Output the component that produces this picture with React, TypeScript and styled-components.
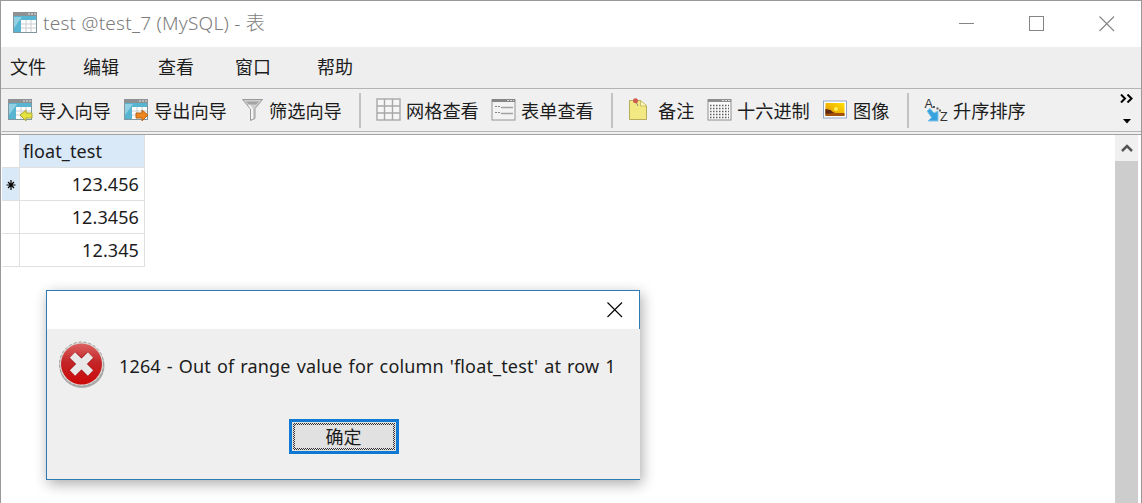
import { ReactNode } from "react";
import styled, { createGlobalStyle } from "styled-components";

const GlobalStyle = createGlobalStyle`
	* {
		box-sizing: border-box;
	}
	body {
		margin: 0;
		overflow: hidden;
		font-family: "Noto Sans", "Noto Sans CJK SC", sans-serif;
		color: #1c1c1c;
	}
	svg {
		display: block;
		flex: none;
	}
`;

const Window = styled.div`
	position: relative;
	display: flex;
	flex-direction: column;
	width: 1142px;
	height: 503px;
	background-color: #ffffff;
	border: 1px solid #9b989b;
	border-width: 1px 1px 0 1px;
`;

const TitleBar = styled.header`
	display: flex;
	align-items: center;
	height: 46px;
	padding-left: 12px;

	> svg {
		margin-top: -2px;
	}
`;

const Title = styled.h1`
	flex: 1;
	margin: -2px 0 0 5px;
	font-size: 19px;
	line-height: 24px;
	font-weight: 300;
	letter-spacing: 0.25px;
	color: #7c7c7c;
`;

const WindowButtons = styled.div`
	display: flex;
	gap: 54px;
	padding-right: 26px;
`;

const MenuBar = styled.nav`
	display: flex;
	height: 41px;
	padding-left: 9px;
	background-color: #efeeef;
`;

const MenuItem = styled.span<{ width: number }>`
	width: ${props => props.width}px;
	font-size: 18px;
	line-height: 41px;
`;

const ToolBar = styled.div`
	display: flex;
	height: 47px;
	background-color: #f0f0f0;
	border-top: 1px solid #b4b4b4;
	border-bottom: 1px solid #a2a2a2;
`;

const Tools = styled.div`
	display: flex;
	flex: 1;
	margin-left: 1px;
	height: 43px;
	padding-left: 6px;
	border-bottom: 1px solid #b4b4b4;
`;

const Tool = styled.div<{ width: number; gap?: number }>`
	display: flex;
	align-items: center;
	gap: ${props => props.gap ?? 5}px;
	width: ${props => props.width}px;
	font-size: 18.2px;
	white-space: nowrap;
`;

const Separator = styled.div`
	width: 2px;
	height: 35px;
	margin: 4px 15px 0 0;
	background-color: #c2c2c2;
`;

const Overflow = styled.div`
	display: flex;
	flex-direction: column;
	justify-content: space-between;
	align-items: center;
	margin-left: auto;
	padding: 5px 8px 7px 0;
`;

const Content = styled.main`
	display: flex;
	flex: 1;
	justify-content: space-between;
	align-items: stretch;
	padding: 0 3px 0 1px;
`;

const Table = styled.div`
	display: grid;
	grid-template-columns: 18px 125px;
	grid-template-rows: repeat(4, 33px);
	align-self: flex-start;
`;

const Cell = styled.div<{ align?: string; active?: boolean }>`
	padding: 0 5px 0 3px;
	border-right: 1px solid #e0e0e0;
	border-bottom: 1px solid #e0e0e0;
	background-color: ${props => (props.active ? "#d9e9f8" : "#ffffff")};
	text-align: ${props => props.align ?? "right"};
	font-size: 18px;
	letter-spacing: 0.1px;
	line-height: 33px;
`;

const Marker = styled(Cell)`
	padding: 11px 0 0 4px;
`;

const ScrollBar = styled.div`
	display: flex;
	flex-direction: column;
	align-items: center;
	width: 23px;
	background-color: #cdcdcd;
`;

const ScrollButton = styled.div`
	display: flex;
	align-items: center;
	justify-content: center;
	width: 100%;
	height: 26px;
	background-color: #f0f0f0;
`;

const Dialog = styled.section`
	position: absolute;
	left: 45px;
	top: 289px;
	width: 594px;
	height: 190px;
	border: 1px solid #2d7ab5;
	border-right: 0;
	background-color: #efefef;
	box-shadow: 2px 4px 13px rgba(0, 0, 0, 0.33);
`;

const DialogTitle = styled.div`
	display: flex;
	justify-content: flex-end;
	align-items: center;
	height: 38px;
	padding: 0 16px 1px 0;
	background-color: #ffffff;
	border-right: 1px solid #2d7ab5;
`;

const DialogBody = styled.div`
	display: flex;
	flex-direction: column;
	align-items: center;
	padding: 11px 0 0 11px;
`;

const Message = styled.div`
	display: flex;
	align-items: center;
	align-self: flex-start;
	gap: 14px;
	height: 52px;
	font-size: 18px;
	letter-spacing: 0.15px;
	word-spacing: 1.2px;
	white-space: nowrap;
`;

const OkButton = styled.button`
	width: 110px;
	height: 35px;
	margin: 27px 11px 0 0;
	padding: 1px;
	border: 3px solid #0f78d2;
	background-color: #e1e1e1;
	font: inherit;
	font-size: 18px;
	color: #1c1c1c;
`;

/* checkered focus ring */
const Focus = styled.span`
	display: block;
	height: 27px;
	padding: 2px;
	background: repeating-conic-gradient(#333333 0 25%, #e1e1e1 0 50%) 0 0 / 2px 2px;
`;

const Label = styled.span`
	display: block;
	height: 23px;
	background-color: #e1e1e1;
	line-height: 24px;
`;

function TableIcon({ children }: { children?: ReactNode }) {
	return (
		<svg width="25" height="24" viewBox="0 0 25 24">
			<rect x="0.5" y="1.5" width="23" height="20" fill="#58b5d2" stroke="#8197a0" />
			<path d="M1 6h8L1 17z" fill="#91d0e3" />
			<rect x="0" y="1" width="24" height="4" fill="#8d9193" />
			<path d="M15 3h2M18 3h2M21 3h2" stroke="#e4e4e4" />
			<rect x="8" y="9" width="15" height="12" fill="#ffffff" />
			<path d="M8 13h15M8 17h15M13 9v12M18 9v12" stroke="#c9ced1" />
			{children}
		</svg>
	);
}

function FilterIcon() {
	return (
		<svg width="23" height="24" viewBox="0 0 23 24">
			<path d="M1.5 1.5h20l-7.5 9v10l-4.5 2V11z" fill="#cfcfcf" stroke="#9a9a9a" />
			<path d="M5 3.5h13l-3 3H8z" fill="#a4a4a4" />
			<path d="M8 7l3 4v10" fill="none" stroke="#f4f4f4" strokeWidth="2" />
		</svg>
	);
}

function GridIcon() {
	return (
		<svg width="25" height="24" viewBox="0 0 25 24">
			<rect x="1" y="1" width="23" height="21" fill="#f6f6f6" stroke="#a8a8a8" strokeWidth="1.4" />
			<path d="M1 8h23M1 15h23M8.5 1v21M16.5 1v21" stroke="#a8a8a8" strokeWidth="1.4" />
		</svg>
	);
}

function FormIcon() {
	return (
		<svg width="25" height="24" viewBox="0 0 25 24">
			<rect x="1" y="1.5" width="23" height="20.5" fill="#f3f3f3" stroke="#949494" />
			<path d="M1 2.5h23" stroke="#858585" strokeWidth="3" />
			<path d="M16 2.5h2M19 2.5h2M22 2.5h1" stroke="#dddddd" />
			<path d="M4 8.5h2M7 8.5h2M4 14.5h2M7 14.5h2" stroke="#858585" />
			<path d="M10 9.5h12M10 15.5h12" stroke="#a2a2a2" strokeWidth="1.5" />
		</svg>
	);
}

function NoteIcon() {
	return (
		<svg width="20" height="24" viewBox="0 0 20 24">
			<path d="M1.5 2.5h11l6 5v14h-17z" fill="#f3e983" stroke="#b8ad5b" />
			<path d="M12.5 3v5h6" fill="#fff8bc" stroke="#c8bd66" />
			<path d="M8 4l2 4" stroke="#8d8d75" />
			<circle cx="7.5" cy="2.8" r="2.5" fill="#ce5a50" />
		</svg>
	);
}

function HexIcon() {
	return (
		<svg width="25" height="24" viewBox="0 0 25 24">
			<rect x="1" y="1.5" width="23" height="20.5" fill="#fafafa" stroke="#8e8e8e" />
			<path d="M1 2.5h23" stroke="#8e8e8e" strokeWidth="3" />
			<path d="M15 2.5h2M18 2.5h2M21 2.5h2" stroke="#dedede" />
			<path
				d="M3 7.5h19M3 10.5h19M3 13.5h19M3 16.5h19M3 19.5h19"
				stroke="#5e5e5e"
				strokeWidth="1.4"
				strokeDasharray="1.5 1.5"
			/>
		</svg>
	);
}

function ImageIcon() {
	return (
		<svg width="24" height="20" viewBox="0 0 24 20">
			<defs>
				<linearGradient id="sunset" x1="1" y1="0" x2="0" y2="1">
					<stop offset="0" stopColor="#ffe100" />
					<stop offset="0.6" stopColor="#eeb000" />
					<stop offset="1" stopColor="#c87a09" />
				</linearGradient>
			</defs>
			<rect x="0.5" y="1" width="23" height="17" fill="#ffffff" stroke="#91a5c5" />
			<rect x="2.5" y="3" width="19" height="13" fill="url(#sunset)" />
			<path d="M2.5 9l5 2 5 2h9v3h-19z" fill="#a3520c" />
			<path d="M2.5 9l5 1 3 3-8 1z" fill="#5e2a12" />
			<circle cx="13" cy="9" r="2" fill="#fff056" />
		</svg>
	);
}

const Letter = styled.text`
	font-family: "Liberation Sans", sans-serif;
	font-size: 12.5px;
	fill: #333333;
`;

function SortIcon() {
	return (
		<svg width="25" height="28" viewBox="0 0 25 28">
			<Letter x="0.5" y="12">
				A
			</Letter>
			<Letter x="16" y="25">
				Z
			</Letter>
			<path d="M9 11h2M12.5 12.5h2M15 14.5h2" stroke="#555555" strokeWidth="1.8" />
			<path d="M3 15l3-2.5 4 4.5 4-2v10H4l3.5-3.5z" fill="#36a3df" stroke="#80c3e7" />
		</svg>
	);
}

function ErrorIcon() {
	return (
		<svg width="47" height="52" viewBox="0 0 47 52">
			<defs>
				<linearGradient id="error" x1="0" y1="0" x2="0" y2="1">
					<stop offset="0" stopColor="#dc6260" />
					<stop offset="0.45" stopColor="#c32628" />
					<stop offset="1" stopColor="#cc0808" />
				</linearGradient>
			</defs>
			<ellipse cx="24" cy="26" rx="22.5" ry="22" fill="#aaaaaa" />
			<circle cx="23.5" cy="24" r="22" fill="#d9d6d3" stroke="#a29d9a" strokeDasharray="3 2" />
			<circle cx="23.5" cy="24" r="20.5" fill="url(#error)" />
			<path d="M14.5 15l18 18M32.5 15l-18 18" stroke="#a41518" strokeWidth="9" />
			<path d="M14.5 15l18 18M32.5 15l-18 18" stroke="#e8e8e8" strokeWidth="7.5" />
		</svg>
	);
}

function CloseIcon({ color }: { color: string }) {
	return (
		<svg width="16" height="16" viewBox="0 0 16 16">
			<path d="M0.5 0.5l14.5 14.5M15 0.5l-14.5 14.5" stroke={color} strokeWidth="1.1" />
		</svg>
	);
}

const menus = [
	{ label: "文件", width: 73 },
	{ label: "编辑", width: 75 },
	{ label: "查看", width: 77 },
	{ label: "窗口", width: 82 },
	{ label: "帮助", width: 60 },
];

const rows = ["123.456", "12.3456", "12.345"];

function App() {
	return (
		<>
			<GlobalStyle />
			<Window>
				<TitleBar>
					<TableIcon />
					<Title>test @test_7 (MySQL) - 表</Title>
					<WindowButtons>
						<svg width="16" height="16">
							<path d="M0 7.5h15" stroke="#858585" />
						</svg>
						<svg width="16" height="16">
							<rect x="0.5" y="0.5" width="14" height="14" fill="none" stroke="#858585" />
						</svg>
						<CloseIcon color="#858585" />
					</WindowButtons>
				</TitleBar>
				<MenuBar>
					{menus.map(menu => (
						<MenuItem key={menu.label} width={menu.width}>
							{menu.label}
						</MenuItem>
					))}
				</MenuBar>
				<ToolBar>
					<Tools>
						<Tool width={116}>
							<TableIcon>
								<path d="M12 17l6-5v3h6v5h-6v3z" fill="#e4e23c" stroke="#a8a43b" />
							</TableIcon>
							导入向导
						</Tool>
						<Tool width={117}>
							<TableIcon>
								<path d="M24 17l-6-5v3h-6v5h6v3z" fill="#ee861d" stroke="#b7651a" />
							</TableIcon>
							导出向导
						</Tool>
						<Tool width={118}>
							<FilterIcon />
							筛选向导
						</Tool>
						<Separator />
						<Tool width={115}>
							<GridIcon />
							网格查看
						</Tool>
						<Tool width={120}>
							<FormIcon />
							表单查看
						</Tool>
						<Separator />
						<Tool width={79} gap={10}>
							<NoteIcon />
							备注
						</Tool>
						<Tool width={116}>
							<HexIcon />
							十六进制
						</Tool>
						<Tool width={84} gap={6}>
							<ImageIcon />
							图像
						</Tool>
						<Separator />
						<Tool width={110} gap={4}>
							<SortIcon />
							升序排序
						</Tool>
						<Overflow>
							<svg width="13" height="9">
								<path d="M1 0.5l4 4-4 4M7.5 0.5l4 4-4 4" fill="none" stroke="#000000" strokeWidth="2" />
							</svg>
							<svg width="8" height="5">
								<path d="M0 0h8L4 4.5z" />
							</svg>
						</Overflow>
					</Tools>
				</ToolBar>
				<Content>
					<Table>
						<Cell />
						<Cell align="left" active>
							float_test
						</Cell>
						{rows.map((value, index) => [
							<Marker key={`${value}-marker`} active={index === 0}>
								{index === 0 && (
									<svg width="10" height="12">
										<path d="M5 1v10M0.5 6h9M2 3l6 6M8 3l-6 6" stroke="#000000" strokeWidth="1.2" />
									</svg>
								)}
							</Marker>,
							<Cell key={value}>{value}</Cell>,
						])}
					</Table>
					<ScrollBar>
						<ScrollButton>
							<svg width="12" height="10">
								<path d="M1 8l5-5 5 5" fill="none" stroke="#555555" strokeWidth="2.5" />
							</svg>
						</ScrollButton>
					</ScrollBar>
				</Content>
				<Dialog>
					<DialogTitle>
						<CloseIcon color="#000000" />
					</DialogTitle>
					<DialogBody>
						<Message>
							<ErrorIcon />
							1264 - Out of range value for column 'float_test' at row 1
						</Message>
						<OkButton>
							<Focus>
								<Label>确定</Label>
							</Focus>
						</OkButton>
					</DialogBody>
				</Dialog>
			</Window>
		</>
	);
}

export default App;
